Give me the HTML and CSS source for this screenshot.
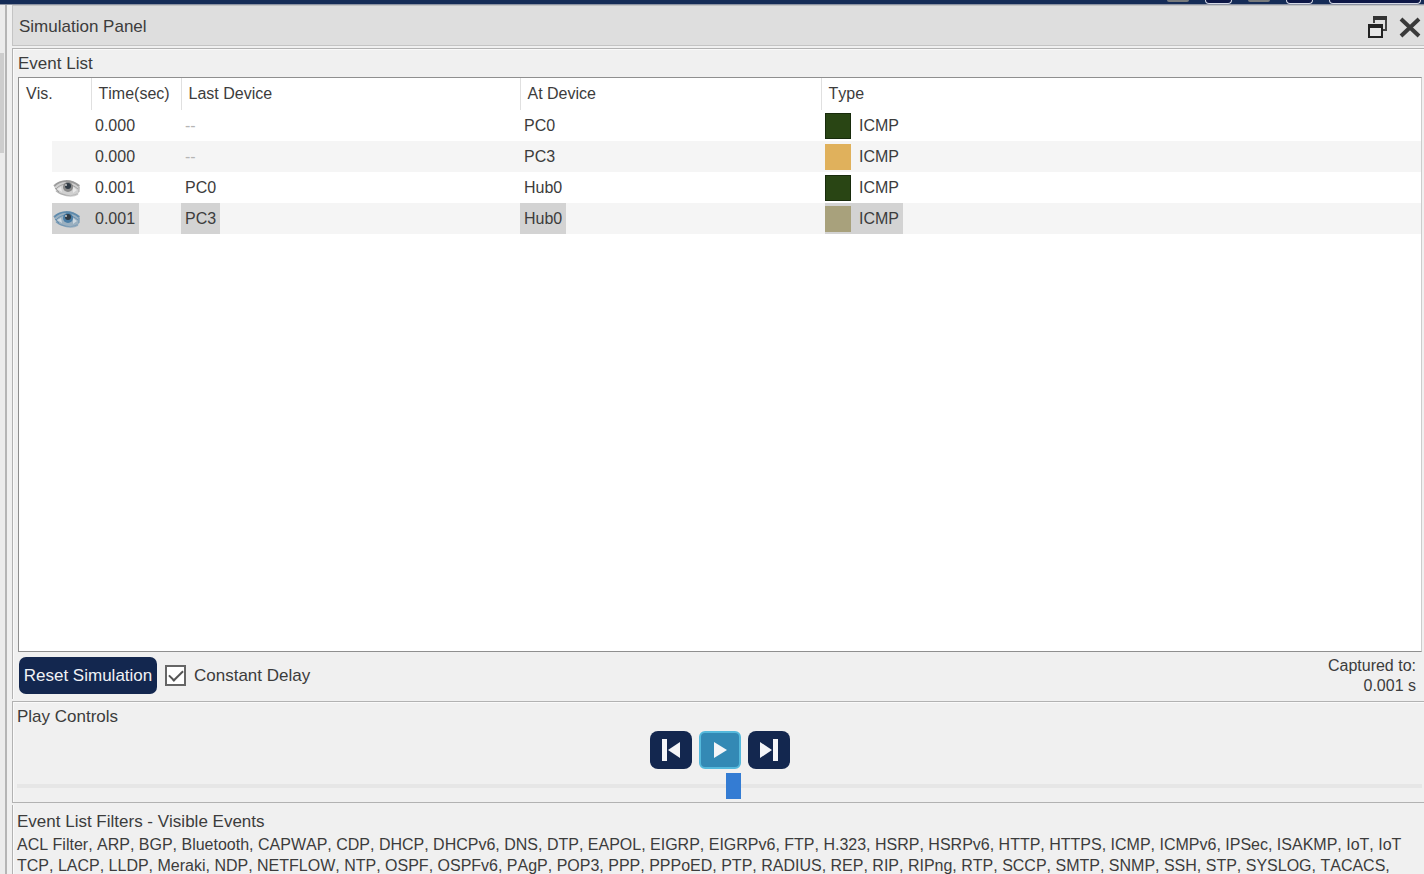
FILE: index.html
```html
<!DOCTYPE html>
<html lang="en">
<head>
<meta charset="utf-8">
<title>Simulation Panel</title>
<link rel="stylesheet" href="styles.css">
</head>
<body>
<svg width="0" height="0" class="defs" aria-hidden="true">
  <symbol id="eye" viewBox="0 0 28 20">
    <path d="M1 8C5 1 18 0 27 7L26 15C20 19 8 19 3 13Z" fill="currentColor" opacity=".35"/>
    <path d="M3 13C8 17 18 20 25 16" fill="none" stroke="currentColor" stroke-width="1.5" opacity=".4"/>
    <path d="M1 8C7 2 18 1 26 8" fill="none" stroke="currentColor" stroke-width="2" opacity=".6"/>
    <path d="M3 11C8 5 17 4 25 11M2 10L6 14M26 9V14" fill="none" stroke="currentColor" stroke-width="1" opacity=".5"/>
    <path d="M4 11L8 9L9 14ZM20 9L24 12L20 15Z" fill="#fff" opacity=".5"/>
    <circle cx="15" cy="9" r="5" fill="currentColor" opacity=".8"/>
    <circle cx="15" cy="8" r="3" fill="#2f3a44"/>
    <circle cx="13" cy="7" r="1" fill="#ccc"/>
  </symbol>
</svg>
<header class="toolbar"><i class="knob"></i><i class="pill"></i><i class="knob"></i><i class="pill"></i><i class="pill wide"></i></header>
<div class="workspace">
  <aside class="gutter"><div class="scroll"></div></aside>
  <main class="panel">
    <div class="titlebar">
      <h1>Simulation Panel</h1>
      <button class="icon" aria-label="Restore"><svg width="22" height="24" viewBox="0 0 22 24"><path d="M7 8V3H19V15H15" fill="none" stroke="#444" stroke-width="2"/><path d="M6 3H20" stroke="#333" stroke-width="4"/><rect x="2" y="11" width="13" height="11" fill="#e6e6e6" stroke="#222" stroke-width="2"/><path d="M1 11H16" stroke="#222" stroke-width="4"/></svg></button>
      <button class="icon" aria-label="Close"><svg width="22" height="24" viewBox="0 0 22 24"><path d="M2 4L20 21M20 4L2 21" stroke="#3a3a3a" stroke-width="4"/></svg></button>
    </div>
    <section class="box events">
      <h2>Event List</h2>
      <div class="list">
        <table>
          <colgroup><col class="c-vis"><col class="c-time"><col class="c-last"><col class="c-at"><col></colgroup>
          <thead><tr><th>Vis.</th><th>Time(sec)</th><th>Last Device</th><th>At Device</th><th>Type</th></tr></thead>
          <tbody>
            <tr><td><div class="cell vis"></div></td><td><div class="cell">0.000</div></td><td><div class="cell dim">--</div></td><td><div class="cell">PC0</div></td><td><div class="cell type"><i class="swatch green"></i>ICMP</div></td></tr>
            <tr><td><div class="cell vis"></div></td><td><div class="cell">0.000</div></td><td><div class="cell dim">--</div></td><td><div class="cell">PC3</div></td><td><div class="cell type"><i class="swatch amber"></i>ICMP</div></td></tr>
            <tr><td><div class="cell vis"><svg class="eye" aria-label="Visible"><use href="#eye"/></svg></div></td><td><div class="cell">0.001</div></td><td><div class="cell">PC0</div></td><td><div class="cell">Hub0</div></td><td><div class="cell type"><i class="swatch green"></i>ICMP</div></td></tr>
            <tr class="selected"><td><div class="cell vis"><svg class="eye" aria-label="Visible"><use href="#eye"/></svg></div></td><td><div class="cell">0.001</div></td><td><div class="cell">PC3</div></td><td><div class="cell">Hub0</div></td><td><div class="cell type"><i class="swatch olive"></i>ICMP</div></td></tr>
          </tbody>
        </table>
      </div>
      <div class="actions">
        <button class="reset">Reset Simulation</button>
        <label class="check"><input type="checkbox" checked>Constant Delay</label>
        <p class="captured">Captured to:<br>0.001 s</p>
      </div>
    </section>
    <section class="box play">
      <h2>Play Controls</h2>
      <div class="buttons">
        <button aria-label="Back"><svg width="22" height="24" viewBox="0 0 22 24"><path d="M2 1H7V23H2ZM20 4V20L8 12Z" fill="#f4f5f8"/></svg></button>
        <button class="active" aria-label="Play"><svg width="22" height="24" viewBox="0 0 22 24"><path d="M5 4V20L18 12Z" fill="#f4f5f8"/></svg></button>
        <button aria-label="Forward"><svg width="22" height="24" viewBox="0 0 22 24"><path d="M15 1H20V23H15ZM2 4V20L14 12Z" fill="#f4f5f8"/></svg></button>
      </div>
      <input class="speed" type="range" min="0" max="100" value="51" aria-label="Play speed">
    </section>
    <section class="box filters">
      <h2>Event List Filters - Visible Events</h2>
      <p>ACL Filter, ARP, BGP, Bluetooth, CAPWAP, CDP, DHCP, DHCPv6, DNS, DTP, EAPOL, EIGRP, EIGRPv6, FTP, H.323, HSRP, HSRPv6, HTTP, HTTPS, ICMP, ICMPv6, IPSec, ISAKMP, IoT, IoT<br>TCP, LACP, LLDP, Meraki, NDP, NETFLOW, NTP, OSPF, OSPFv6, PAgP, POP3, PPP, PPPoED, PTP, RADIUS, REP, RIP, RIPng, RTP, SCCP, SMTP, SNMP, SSH, STP, SYSLOG, TACACS,</p>
    </section>
  </main>
</div>
</body>
</html>
```
FILE: styles.css
```css
* { box-sizing: border-box; }
body {
  margin: 0;
  height: 100vh;
  overflow: hidden;
  display: flex;
  flex-direction: column;
  background: #f0f0f0;
  color: #3c3c3c;
  font: 16px/20px "Liberation Sans", Arial, sans-serif;
  font-kerning: none;
}
h1, h2, p { margin: 0; font-size: inherit; font-weight: normal; }
h1, h2 { font-size: 17px; }
button { border: 0; padding: 0; font: inherit; }
.defs { position: absolute; }

.toolbar {
  flex: none;
  height: 5px;
  display: flex;
  justify-content: flex-end;
  gap: 16px;
  padding-right: 3px;
  background: #152c57;
  border-bottom: 1px solid #8c93a3;
  overflow: hidden;
}
.knob { width: 22px; height: 2px; border-radius: 0 0 4px 4px; background: #777a7c; }
.pill { width: 27px; height: 4px; border: 1px solid #d5d9e6; border-top: 0; border-radius: 0 0 6px 6px; background: #0d1746; }
.pill.wide { width: 92px; }

.workspace { flex: 1; min-height: 0; display: flex; }
.gutter { flex: none; width: 7px; margin-right: 5px; padding-top: 48px; background: #ececec; border-right: 2px solid #b5b5b5; }
.scroll { width: 4px; height: 100px; background: #cdcdcd; }
.panel { flex: 1; min-width: 0; display: flex; flex-direction: column; gap: 2px; }

.titlebar {
  flex: none;
  height: 41px;
  display: flex;
  align-items: center;
  gap: 10px;
  padding: 2px 3px 0 6px;
  background: #dedede;
  border: 1px solid #c4c4c4;
  border-right: 0;
}
.titlebar h1 { flex: 1; }
.icon { display: flex; background: none; }

.box { border: 1px solid #b2b2b2; border-width: 1px 0 0 1px; box-shadow: inset 1px 1px #fafafa; padding-left: 4px; }
.events { flex: 1; min-height: 0; display: flex; flex-direction: column; padding: 5px 2px 0 5px; }
.events h2 { height: 23px; }
.list { flex: 1; min-height: 0; background: #fff; border: 1px solid #8f8f8f; border-right-color: #ccc; }

table { width: 100%; table-layout: fixed; border-collapse: collapse; }
.c-vis { width: 72px; }
.c-time { width: 90px; }
.c-last { width: 339px; }
.c-at { width: 301px; }
th { height: 32px; padding: 0 0 0 7px; text-align: left; font-weight: normal; border-right: 1px solid #e0e0e0; }
th:last-child { border-right: 0; }
td { padding: 0; height: 31px; }
tbody tr:nth-child(even) td + td, tbody tr:nth-child(even) .vis { background: #f5f5f5; }
.cell { width: max-content; height: 31px; padding: 0 4px; display: flex; align-items: center; }
.cell.vis { width: auto; margin-left: 33px; padding: 0 0 0 1px; }
.cell.type { margin-left: 4px; padding-left: 0; }
.dim { color: #b5b5b5; }
tbody tr.selected .cell, tbody tr.selected .cell.vis { background: #d3d3d3; }
.eye { width: 28px; height: 20px; color: #777; }
.selected .eye { color: #35719f; }
.swatch { width: 26px; height: 26px; margin-right: 8px; }
.green { background: #294514; border: 1px solid #182b0c; }
.amber { background: #e0b15c; }
.olive { background: #a8a17c; }

.actions { flex: none; height: 47px; display: flex; align-items: center; gap: 8px; padding-left: 1px; }
.reset { width: 138px; height: 37px; border-radius: 7px; background: #13274f; color: #f0f2f6; font-size: 17px; }
.check { flex: 1; display: flex; align-items: center; gap: 8px; font-size: 17px; }
.check input {
  appearance: none;
  width: 21px;
  height: 21px;
  margin: 0;
  border: 2px solid #666;
  background: #fff;
  display: grid;
  place-items: center;
}
.check input:checked::before { content: ""; width: 12px; height: 6px; margin-bottom: 4px; border: solid #555; border-width: 0 0 2px 2px; transform: rotate(-45deg); }
.captured { text-align: right; padding-right: 6px; }

.play { flex: none; height: 102px; padding: 5px 2px 0 4px; border-bottom-width: 1px; }
.play h2 { height: 24px; }
.buttons { display: flex; justify-content: center; gap: 7px; }
.buttons button { width: 42px; height: 38px; border-radius: 8px; background: #13274f; display: grid; place-items: center; }
.buttons .active { background: #3389b5; border: 2px solid #55b9dc; border-radius: 6px; }
.speed { appearance: none; display: block; width: 100%; height: 26px; margin: 4px 0 0; background: linear-gradient(#e6e6e6, #e6e6e6) center / 100% 4px no-repeat; }
.speed::-webkit-slider-thumb { appearance: none; width: 15px; height: 26px; background: #347cd3; }

.filters { flex: none; height: 69px; border-top: 0; box-shadow: inset 1px 0 #fafafa; padding-top: 7px; overflow: hidden; }
.filters h2 { height: 22px; }
.filters p { line-height: 21px; white-space: nowrap; }
```
